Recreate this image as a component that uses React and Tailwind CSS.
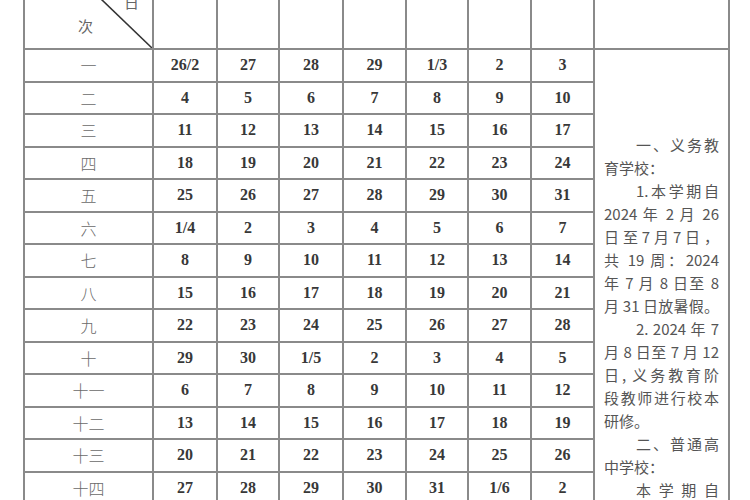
import React from 'react';

const weeks = [
    ['一', ['26/2', '27', '28', '29', '1/3', '2', '3']],
    ['二', ['4', '5', '6', '7', '8', '9', '10']],
    ['三', ['11', '12', '13', '14', '15', '16', '17']],
    ['四', ['18', '19', '20', '21', '22', '23', '24']],
    ['五', ['25', '26', '27', '28', '29', '30', '31']],
    ['六', ['1/4', '2', '3', '4', '5', '6', '7']],
    ['七', ['8', '9', '10', '11', '12', '13', '14']],
    ['八', ['15', '16', '17', '18', '19', '20', '21']],
    ['九', ['22', '23', '24', '25', '26', '27', '28']],
    ['十', ['29', '30', '1/5', '2', '3', '4', '5']],
    ['十一', ['6', '7', '8', '9', '10', '11', '12']],
    ['十二', ['13', '14', '15', '16', '17', '18', '19']],
    ['十三', ['20', '21', '22', '23', '24', '25', '26']],
    ['十四', ['27', '28', '29', '30', '31', '1/6', '2']],
    ['十五', ['3', '4', '5', '6', '7', '8', '9']],
    ['十六', ['10', '11', '12', '13', '14', '15', '16']],
];

// 'i' = indented + justified, 'j' = justified, 'l' = left
const notes = [
    ['i', '一、义务教'],
    ['l', '育学校：'],
    ['i', '1.本学期自'],
    ['j', '2024 年 2 月 26'],
    ['j', '日至7月7日，'],
    ['j', '共 19 周：2024'],
    ['j', '年 7 月 8 日至 8'],
    ['j', '月 31 日放暑假。'],
    ['i', '2. 2024 年 7'],
    ['j', '月 8 日至 7 月 12'],
    ['j', '日, 义务教育阶'],
    ['j', '段教师进行校本'],
    ['l', '研修。'],
    ['i', '二、普通高'],
    ['l', '中学校：'],
    ['i', '本 学 期 自'],
    ['j', '2024 年 2 月 19'],
    ['j', '日至7月14日。'],
];

const cell = 'border-2 border-[#8a8a8a] p-0';

const NoteLine = ({ kind, text }) => {
    if (kind === 'l') return <div className="h-[23px]">{text}</div>;
    return (
        <div className={`h-[23px] text-justify [text-align-last:justify] ${kind === 'i' ? 'pl-[32px]' : ''}`}>
            {text}
        </div>
    );
};

const App = () => {
    return (
        <div className="w-[750px] h-[500px] overflow-hidden bg-white">
            <table className="table-fixed border-collapse ml-[23px] -mt-[24px] w-[705px]">
                <colgroup>
                    <col className="w-[129px]" />
                    <col className="w-[64px]" />
                    <col className="w-[62px]" />
                    <col className="w-[64px]" />
                    <col className="w-[63px]" />
                    <col className="w-[62px]" />
                    <col className="w-[63px]" />
                    <col className="w-[63px]" />
                    <col className="w-[135px]" />
                </colgroup>
                <tbody>
                    <tr className="h-[72px]">
                        <td className={`${cell} relative`}>
                            <svg className="absolute inset-0 w-full h-full" viewBox="0 0 129 72" preserveAspectRatio="none">
                                <line x1="55" y1="0" x2="129" y2="72" stroke="#333" strokeWidth="1.6" />
                            </svg>
                            <span className="absolute left-[53px] top-[40px] text-[15px] leading-none text-[#666]" style={{ fontFamily: '"Noto Sans CJK SC", sans-serif' }}>次</span>
                            <span className="absolute left-[99px] top-[16px] text-[15px] leading-none text-[#666]" style={{ fontFamily: '"Noto Sans CJK SC", sans-serif' }}>日</span>
                        </td>
                        {[0, 1, 2, 3, 4, 5, 6].map((i) => (
                            <td key={i} className={cell}></td>
                        ))}
                        <td className={cell}></td>
                    </tr>
                    {weeks.map(([label, days], r) => (
                        <tr key={label} className="h-[32.5px]">
                            <td className={`${cell} text-center text-[16px] font-light text-[#6a6a6a] font-['Noto_Sans_CJK_SC',sans-serif]`}>
                                {label}
                            </td>
                            {days.map((d, i) => (
                                <td key={i} className={`${cell} text-center text-[16px] font-bold text-[#383838] font-['Liberation_Serif',serif]`}>
                                    {d}
                                </td>
                            ))}
                            {r === 0 && (
                                <td rowSpan={weeks.length} className={`${cell} align-top pl-[9px] pr-[9px] pt-[83px] text-[15px] leading-[23px] text-[#555] font-['Noto_Sans_CJK_SC',sans-serif]`}>
                                    {notes.map(([kind, text], i) => (
                                        <NoteLine key={i} kind={kind} text={text} />
                                    ))}
                                </td>
                            )}
                        </tr>
                    ))}
                </tbody>
            </table>
        </div>
    );
};

export default App;
